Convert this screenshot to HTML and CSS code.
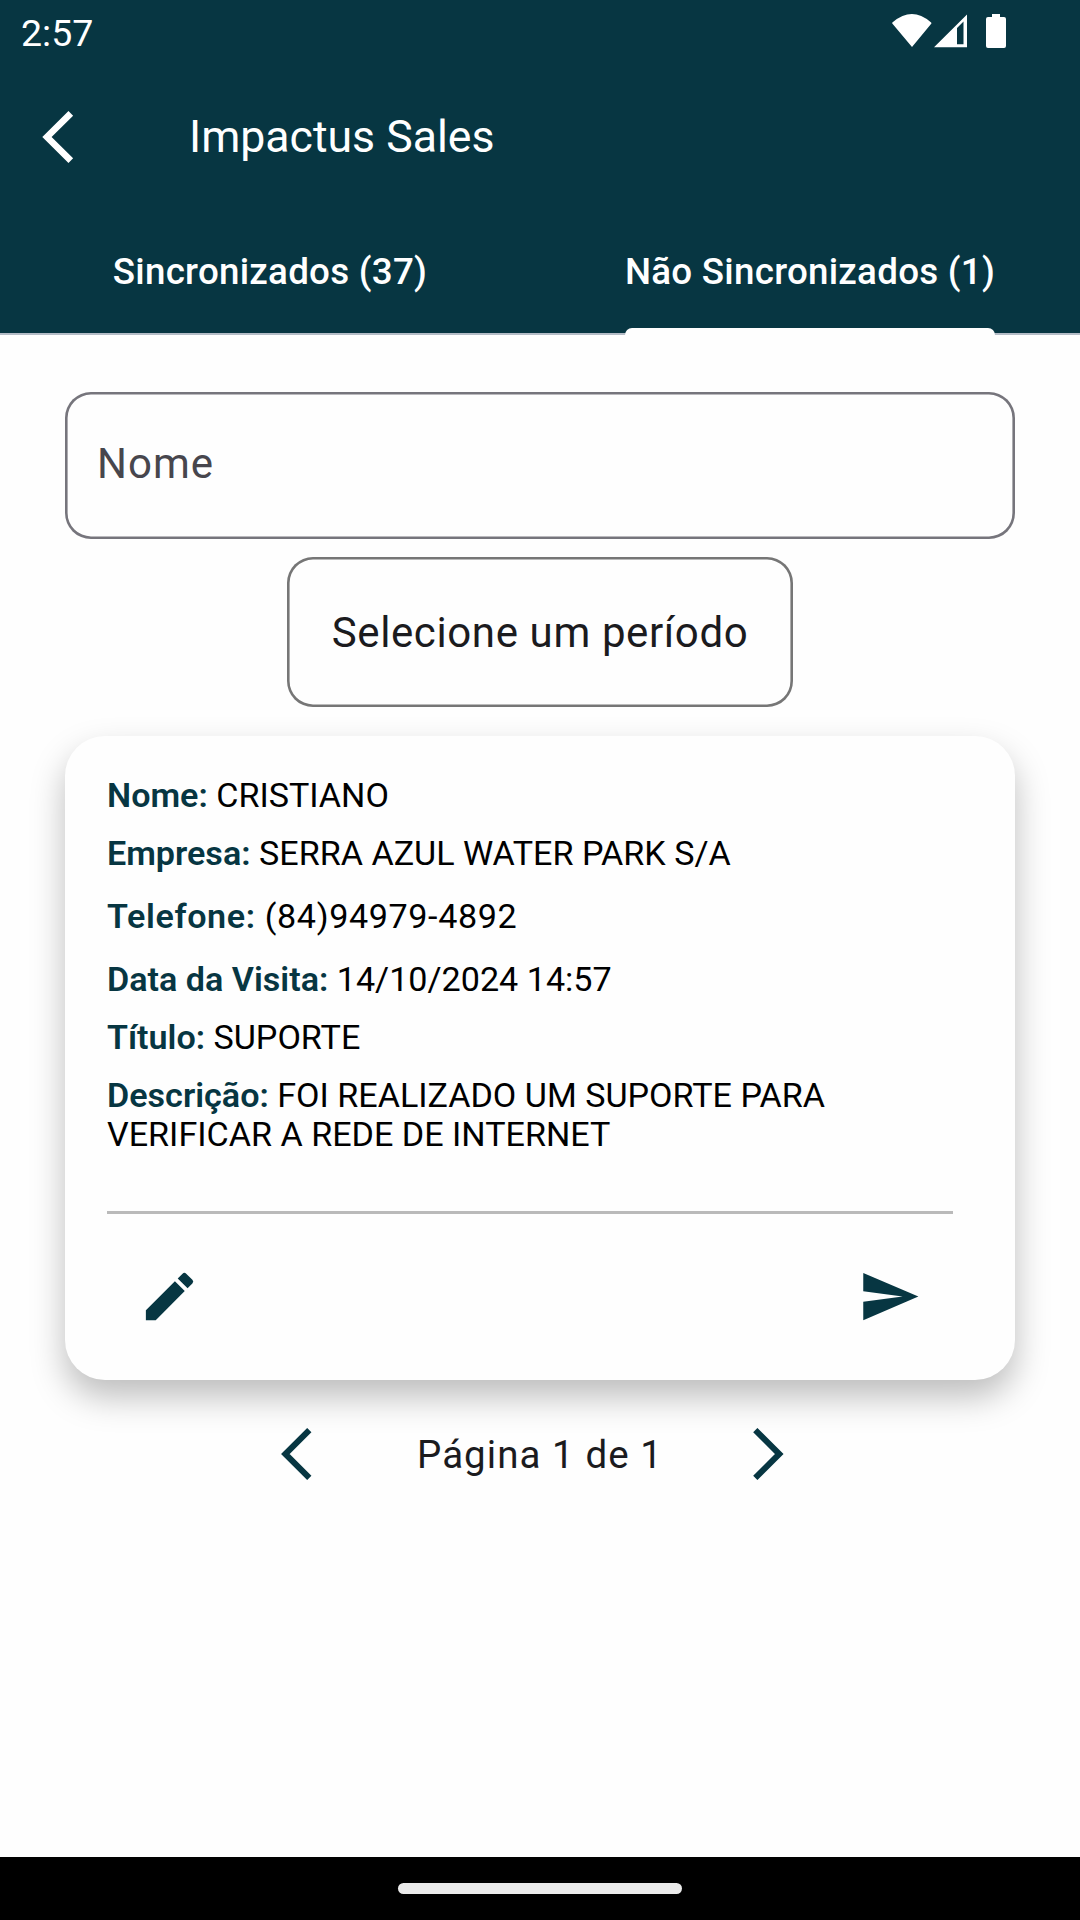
FILE: index.html
```html
<!DOCTYPE html>
<html lang="pt-BR">
<head>
<meta charset="utf-8">
<title>Impactus Sales</title>
<link rel="stylesheet" href="styles.css">
</head>
<body>
<header class="header">
  <div class="status-bar">
    <span class="clock">2:57</span>
    <svg class="status-icons" width="116" height="36" viewBox="0 0 116 36" fill="#fff">
      <path d="M21 34L1.700 11Q0.500 10 2 9Q21 -7 39.500 9Q41 10 40 11Z"/>
      <path fill-rule="evenodd" d="M43 34.300L76 1.500V34.300ZM66 15V31.300H72.500V8.500Z"/>
      <path d="M101 1h8v3h4q2 0 2 2v27q0 2-2 2H97q-2 0-2-2v-27q0-2 2-2H101z"/>
    </svg>
  </div>
  <div class="toolbar">
    <svg class="back" width="32" height="52" viewBox="0 0 32 52"><path d="M28.800 2.400L5 26L28.800 49.600" fill="none" stroke="#fff" stroke-width="6.600"/></svg>
    <h1 class="title">Impactus Sales</h1>
  </div>
  <nav class="tabs">
    <div class="tab"><span>Sincronizados (37)</span></div>
    <div class="tab tab-active"><span>Não Sincronizados (1)</span></div>
  </nav>
</header>
<main class="content">
  <div class="field">Nome</div>
  <div class="period"><span>Selecione um período</span></div>
  <section class="card">
    <p class="row"><b>Nome:</b> CRISTIANO</p>
    <p class="row"><b>Empresa:</b> SERRA AZUL WATER PARK S/A</p>
    <p class="row row-tall row-phone"><b>Telefone:</b> (84)94979-4892</p>
    <p class="row row-tall"><b>Data da Visita:</b> 14/10/2024 14:57</p>
    <p class="row"><b>Título:</b> SUPORTE</p>
    <p class="row"><b>Descrição:</b> FOI REALIZADO UM SUPORTE PARA VERIFICAR A REDE DE INTERNET</p>
    <hr class="rule">
    <div class="actions">
      <svg width="63" height="63" viewBox="0 0 24 24"><path d="M3 17.250V21h3.750L17.810 9.940l-3.750-3.750L3 17.250zM20.710 7.040a1 1 0 0 0 0-1.410l-2.340-2.340a1 1 0 0 0-1.410 0l-1.830 1.830 3.750 3.750 1.830-1.830z"/></svg>
      <svg width="63" height="63" viewBox="0 0 24 24"><path d="M2.010 21L23 12 2.010 3 2 10l15 2-15 2z"/></svg>
    </div>
  </section>
  <div class="pager">
    <svg width="31" height="52" viewBox="0 0 31 52"><path d="M28.300 2.100L4.300 26L28.300 49.900"/></svg>
    <span class="page">Página 1 de 1</span>
    <svg width="31" height="52" viewBox="0 0 31 52"><path d="M2.300 2.100L26.300 26L2.300 49.900"/></svg>
  </div>
</main>
<footer class="nav-bar"><div class="pill"></div></footer>
</body>
</html>
```

FILE: styles.css
```css
* { box-sizing: border-box; }

body {
  margin: 0;
  width: 1080px;
  height: 1920px;
  display: flex;
  flex-direction: column;
  font-family: Roboto, "Noto Sans", sans-serif;
  background: #fefefe;
  color: #1b1b1e;
  overflow: hidden;
}

p, h1, hr { margin: 0; }
svg { display: block; flex: none; }

.header {
  height: 335px;
  flex: none;
  background: #073642;
  color: #fff;
  border-bottom: 2px solid #b4bcc6;
  display: flex;
  flex-direction: column;
}

.status-bar {
  height: 63px;
  flex: none;
  padding: 13px 73px 0 21px;
  display: flex;
  justify-content: space-between;
}

.clock { font-size: 37.500px; line-height: 40px; }

.toolbar {
  height: 147px;
  flex: none;
  padding-left: 41.500px;
  display: flex;
  align-items: center;
}

.title {
  margin-left: 115.500px;
  font-size: 44.625px;
  font-weight: 400;
  line-height: 54px;
}

.tabs {
  flex: none;
  height: 125px;
  display: grid;
  grid-template-columns: 1fr 1fr;
}

.tab {
  display: flex;
  justify-content: center;
  font-size: 36.750px;
  font-weight: 500;
  letter-spacing: 0.260px;
  line-height: 44px;
  white-space: nowrap;
}

.tab span { position: relative; padding-top: 40px; }

.tab-active span::after {
  content: "";
  position: absolute;
  left: 0;
  right: 0;
  bottom: 0;
  height: 7px;
  border-radius: 7px 7px 0 0;
  background: #fefefe;
}

.content {
  flex: 1;
  display: flex;
  flex-direction: column;
  align-items: center;
  padding-top: 57px;
}

.field, .period {
  border-radius: 26px;
  box-shadow: inset 0 0 0 2.600px #76757c;
  font-size: 42px;
  letter-spacing: 0.620px;
  display: flex;
  align-items: center;
}

.field {
  width: 950px;
  height: 147px;
  padding: 0 0 4px 32px;
  letter-spacing: 1px;
  color: #47464d;
}

.period {
  width: 506px;
  height: 150px;
  margin-top: 18px;
  justify-content: center;
  box-shadow: inset 0 0 0 2.600px #767676;
}

.card {
  width: 950px;
  height: 644px;
  margin-top: 29px;
  padding: 40px 42px 0;
  border-radius: 40px;
  background: #fefefe;
  box-shadow: 0 17px 34px rgba(0, 0, 0, 0.260);
  color: #000;
  font-size: 34.125px;
  line-height: 38.700px;
}

.row { margin-bottom: 19.400px; width: 800px; }
.row b { font-weight: 600; color: #073642; }
.row-tall { margin-top: 24.300px; }
.row-phone { letter-spacing: 0.620px; }

.rule {
  width: 846px;
  height: 3px;
  border: 0;
  background: #bababa;
  margin-top: 57px;
}

.actions {
  display: flex;
  justify-content: space-between;
  padding: 51px 52px 0 31px;
  fill: #073642;
}

.pager {
  width: 503px;
  height: 52px;
  margin: 48px 0 0 -16px;
  display: flex;
  align-items: center;
  font-size: 38.500px;
  letter-spacing: 1.050px;
}

.page { flex: 1; padding-left: 105.500px; }

.pager path { fill: none; stroke: #073642; stroke-width: 6; }

.nav-bar {
  height: 63px;
  background: #000;
  display: flex;
  justify-content: center;
  padding-top: 26px;
}

.pill { width: 284px; height: 11px; border-radius: 6px; background: #ebebeb; }
```
